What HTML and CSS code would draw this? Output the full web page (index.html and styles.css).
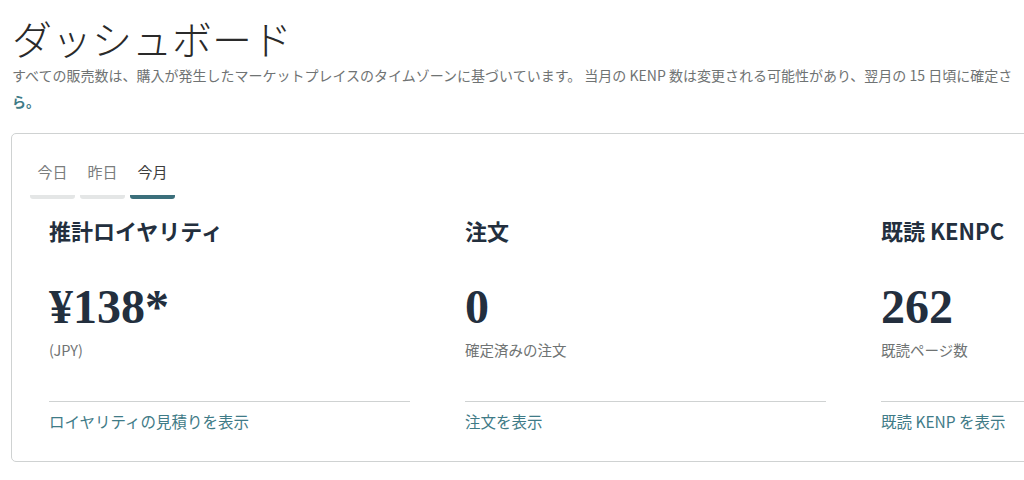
FILE: index.html
```html
<!DOCTYPE html>
<html lang="ja">
<head>
  <meta charset="UTF-8" />
  <meta name="viewport" content="width=device-width, initial-scale=1.0"/>
  <title>ダッシュボード</title>
  <link rel="stylesheet" href="styles.css">
</head>
<body>
  <header class="page-head">
    <h1>ダッシュボード</h1>
    <p class="note">すべての販売数は、購入が発生したマーケットプレイスのタイムゾーンに基づいています。 当月の KENP 数は変更される可能性があり、翌月の 15 日頃に確定さ<br><a href="#">ら。</a></p>
  </header>

  <section class="card">
    <nav class="tabs">
      <a class="tab" href="#">今日</a>
      <a class="tab" href="#">昨日</a>
      <a class="tab active" href="#">今月</a>
    </nav>

    <div class="stats">
      <div class="stat">
        <h2>推計ロイヤリティ</h2>
        <div class="value">¥138*</div>
        <div class="sub">(JPY)</div>
        <a class="more" href="#">ロイヤリティの見積りを表示</a>
      </div>
      <div class="stat">
        <h2>注文</h2>
        <div class="value">0</div>
        <div class="sub">確定済みの注文</div>
        <a class="more" href="#">注文を表示</a>
      </div>
      <div class="stat">
        <h2>既読 KENPC</h2>
        <div class="value">262</div>
        <div class="sub">既読ページ数</div>
        <a class="more" href="#">既読 KENP を表示</a>
      </div>
    </div>
  </section>
</body>
</html>
```

FILE: styles.css
```css
:root {
  --text: #232f3e;
  --muted: #6f7373;
  --link: #3f7b87;
  --line: #cfd2d2;
  --tab: #e4e6e6;
  --tab-on: #3b6f7b;
}
* {
  margin: 0;
  padding: 0;
  box-sizing: border-box;
}
html, body {
  overflow: hidden;
}
body {
  font-family: "Noto Sans CJK JP", "Noto Sans", sans-serif;
  background: #fff;
  color: var(--text);
  width: 1024px;
  height: 480px;
}
a {
  text-decoration: none;
  color: var(--link);
}
.page-head {
  padding: 12px 0 0 12px;
}
h1 {
  font-size: 40px;
  font-weight: 300;
  color: #2a2a2a;
  line-height: 52px;
}
.note {
  font-size: 14px;
  line-height: 26px;
  color: var(--muted);
  white-space: nowrap;
  margin-top: -2px;
}
.note a {
  font-weight: bold;
}
.card {
  margin: 19px 0 0 11px;
  width: 1400px;
  border: 1px solid var(--line);
  border-radius: 5px;
  padding: 27px 0 30px 18px;
}
.tabs {
  display: flex;
  gap: 5px;
}
.tab {
  width: 45px;
  text-align: center;
  font-size: 15px;
  line-height: 22px;
  color: #7a7d7d;
  padding-bottom: 12px;
  border-bottom: 4px solid var(--tab);
  border-radius: 0 0 3px 3px;
}
.tab.active {
  color: #3d3d3d;
  border-bottom-color: var(--tab-on);
}
.stats {
  display: flex;
  gap: 55px;
  margin: 16px 0 0 19px;
}
.stat {
  width: 361px;
  display: flex;
  flex-direction: column;
}
.stat h2 {
  font-size: 22px;
  line-height: 30px;
  font-weight: bold;
}
.value {
  font-family: "Liberation Serif", "DejaVu Serif", serif;
  font-weight: bold;
  font-size: 48px;
  line-height: 48px;
  margin-top: 38px;
}
.sub {
  font-size: 14.5px;
  line-height: 18px;
  color: var(--muted);
  margin-top: 10px;
  padding-bottom: 42px;
  border-bottom: 1px solid var(--line);
}
.more {
  font-size: 15.5px;
  line-height: 20px;
  margin-top: 9px;
}
```
